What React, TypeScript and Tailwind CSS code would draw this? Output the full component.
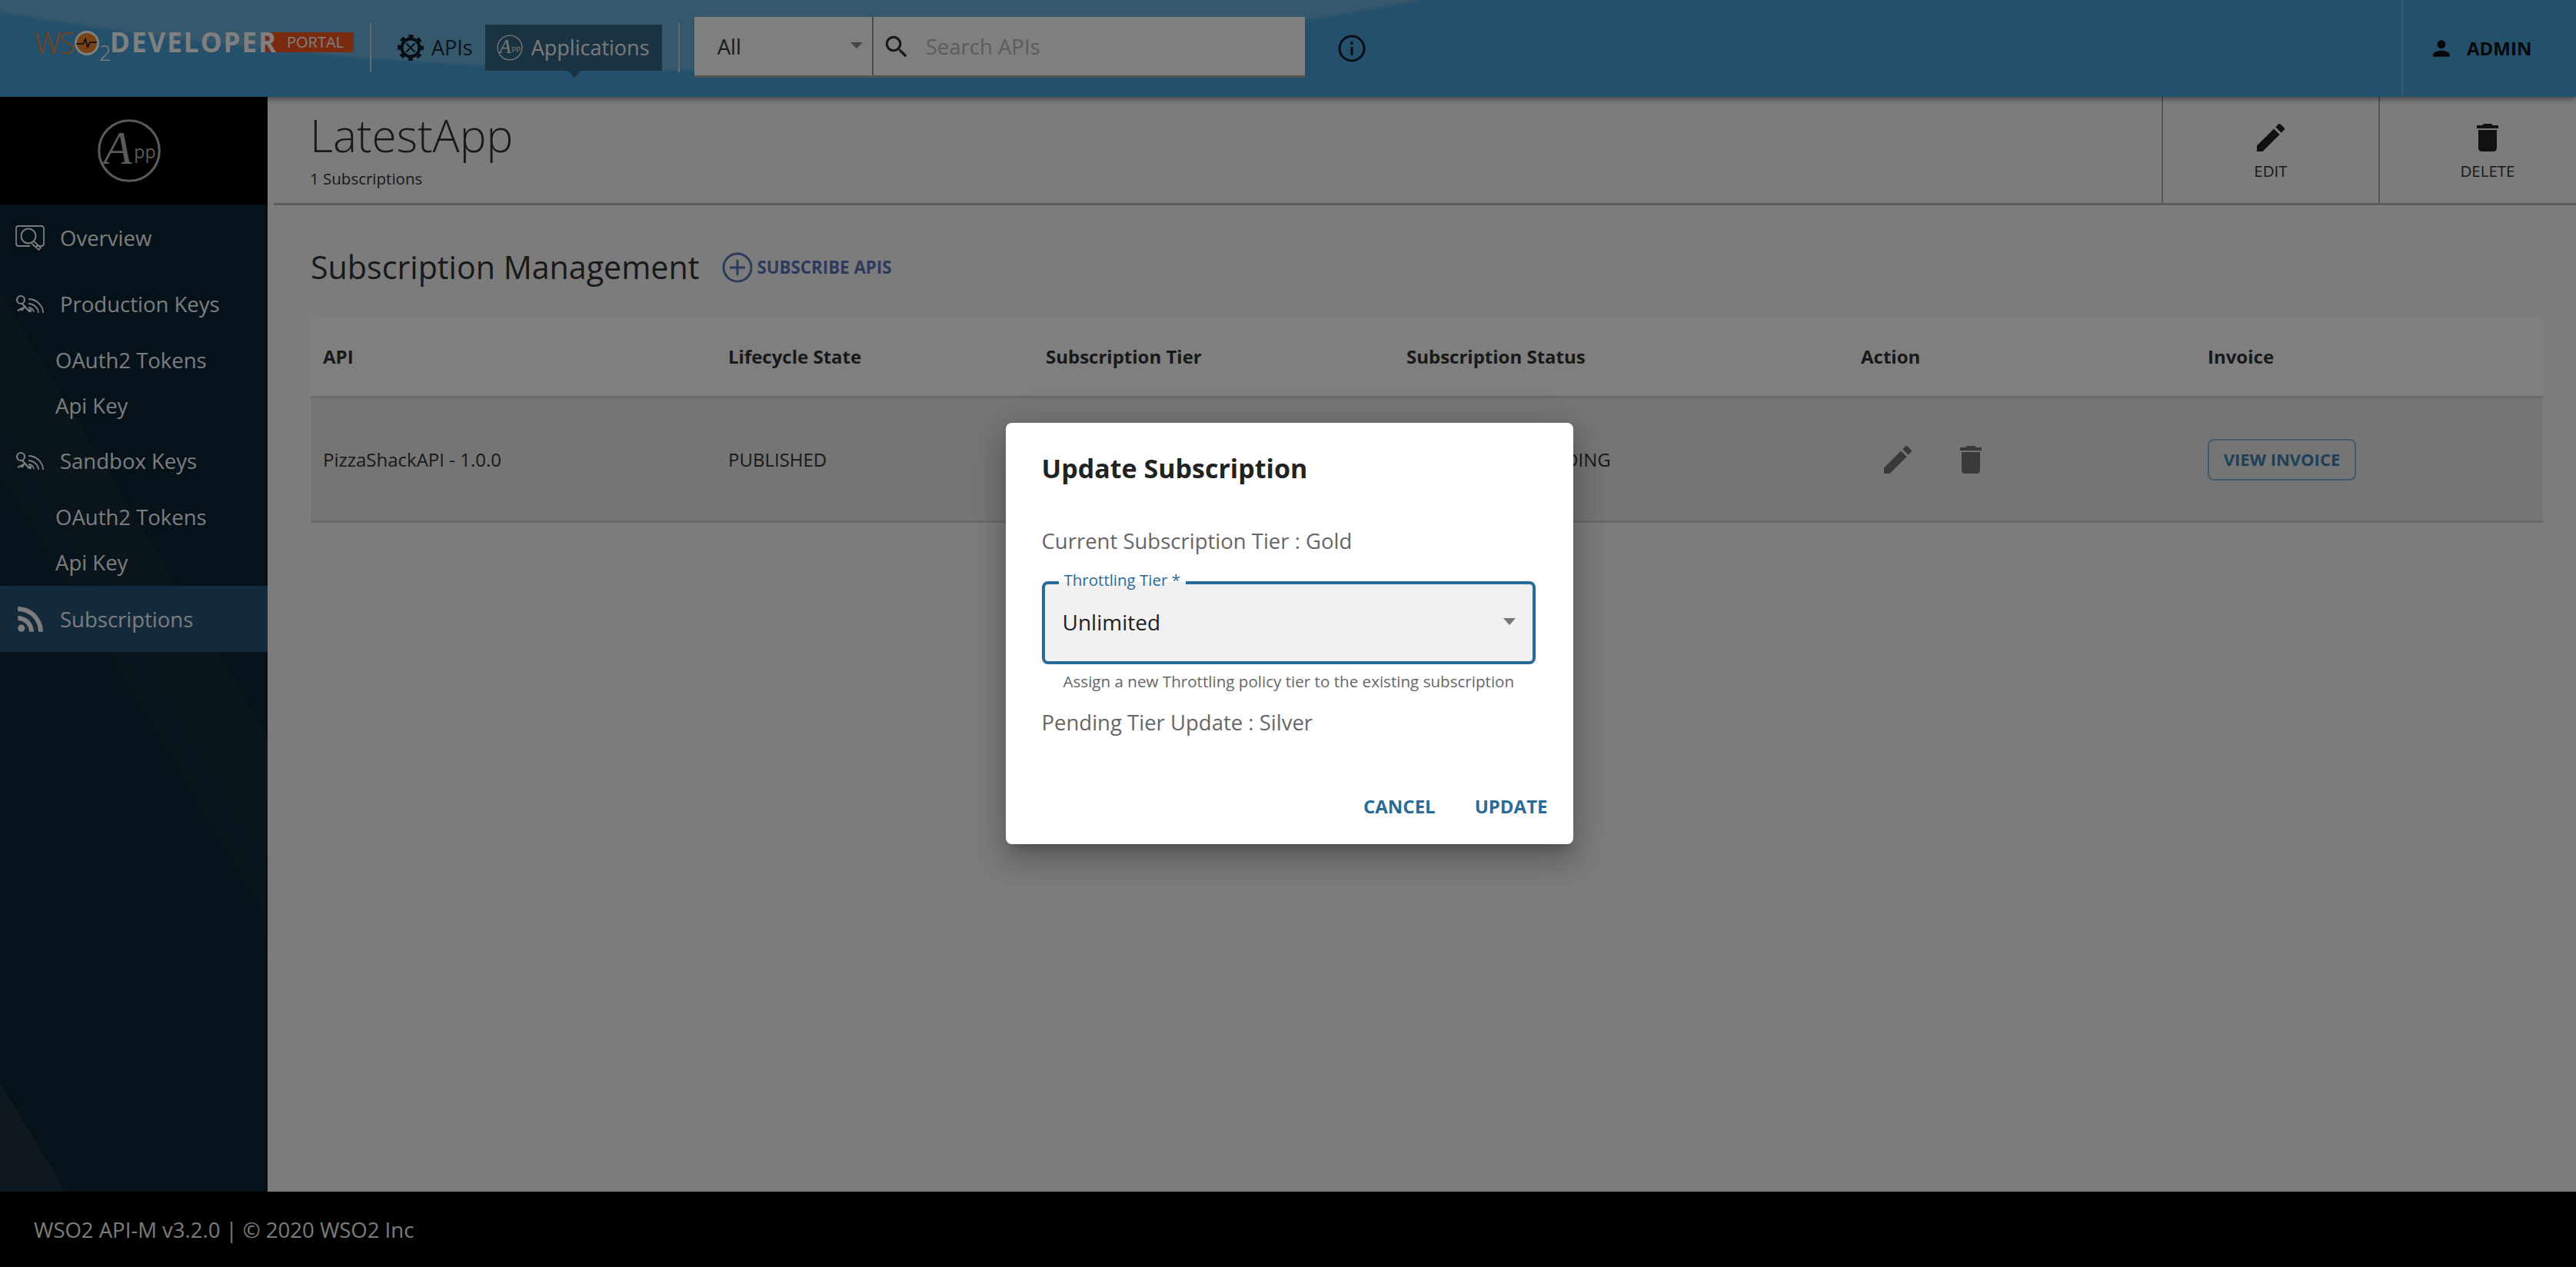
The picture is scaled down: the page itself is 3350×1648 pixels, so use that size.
const editPath = 'M3 17.25V21h3.75L17.81 9.94l-3.75-3.75L3 17.25zM20.71 7.04c.39-.39.39-1.02 0-1.41l-2.34-2.34c-.39-.39-1.02-.39-1.41 0l-1.83 1.83 3.75 3.75 1.83-1.83z';
const deletePath = 'M6 19c0 1.1.9 2 2 2h8c1.1 0 2-.9 2-2V7H6v12zM19 4h-3.5l-1-1h-5l-1 1H5v2h14V4z';
const personPath = 'M12 12c2.21 0 4-1.79 4-4s-1.79-4-4-4-4 1.79-4 4 1.79 4 4 4zm0 2c-2.67 0-8 1.34-8 4v2h16v-2c0-2.66-5.33-4-8-4z';
const searchPath = 'M15.5 14h-.79l-.28-.27C15.41 12.59 16 11.11 16 9.5 16 5.91 13.09 3 9.5 3S3 5.91 3 9.5 5.91 16 9.5 16c1.61 0 3.09-.59 4.23-1.57l.27.28v.79l5 4.99L20.49 19l-4.99-5zm-6 0C7.01 14 5 11.99 5 9.5S7.01 5 9.5 5 14 7.01 14 9.5 11.99 14 9.5 14z';
const rssPath = 'M4 4.44v2.83c7.03 0 12.73 5.7 12.73 12.73h2.83c0-8.59-6.97-15.56-15.56-15.56zm0 5.66v2.83c3.9 0 7.07 3.17 7.07 7.07h2.83c0-5.47-4.43-9.9-9.9-9.9z';

function MuiIcon({ d, className }: { d: string; className: string }) {
  return (
    <svg viewBox="0 0 24 24" fill="currentColor" className={className}>
      <path d={d} />
    </svg>
  );
}

function AppBadge({ className }: { className: string }) {
  return (
    <svg viewBox="0 0 40 40" fill="none" stroke="currentColor" className={className}>
      <circle cx="20" cy="20" r="18.7" strokeWidth="1.5" />
      <text x="4" y="28" fontSize="29" fontStyle="italic" fontFamily="Liberation Serif, serif" fill="currentColor" stroke="none">A</text>
      <text x="23" y="25" fontSize="11" fontFamily="Open Sans, sans-serif" fill="currentColor" stroke="none">pp</text>
    </svg>
  );
}

function GearIcon() {
  return (
    <svg viewBox="0 0 34 34" className="w-[34px] h-[34px] text-[#0c1c28]">
      <circle cx="17" cy="17" r="11.5" fill="none" stroke="currentColor" strokeWidth="4" />
      <circle cx="17" cy="17" r="15" fill="none" stroke="currentColor" strokeWidth="4" strokeDasharray="6 5.78" strokeDashoffset="3" />
      <path d="M12 12l10 10M22 12L12 22" stroke="currentColor" strokeWidth="2" strokeLinecap="round" />
    </svg>
  );
}

function OverviewIcon() {
  return (
    <svg viewBox="0 0 38 34" fill="none" stroke="currentColor" strokeWidth="1.8" className="w-[38px] h-[34px]">
      <path d="M27 27h7a3 3 0 0 0 3-3V4a3 3 0 0 0-3-3H4a3 3 0 0 0-3 3v20a3 3 0 0 0 3 3h15" />
      <circle cx="17" cy="14" r="9.5" strokeWidth="2" />
      <path d="M24 21l9 8-2.5 3-9-8" />
    </svg>
  );
}

function KeyIcon() {
  return (
    <svg viewBox="0 0 38 26" fill="none" stroke="currentColor" className="w-[38px] h-[26px]">
      <circle cx="7" cy="7" r="5" strokeWidth="2.2" />
      <path d="M9 12l9 10M3 21l8-4M12 16l-4 5" strokeWidth="2.2" />
      <circle cx="19" cy="21" r="2.2" fill="currentColor" stroke="none" />
      <path d="M17 6c10 0 19 8 19 18M17 12c7 0 13 6 13 12M17 17c4 0 7 3 7 6" strokeWidth="1.8" />
    </svg>
  );
}

function RssIcon() {
  return (
    <svg viewBox="2 3 19 19" fill="currentColor" className="w-[40px] h-[40px]">
      <circle cx="6.18" cy="17.82" r="2.18" />
      <path d={rssPath} />
    </svg>
  );
}

function Logo() {
  return (
    <div className="flex items-start w-[415px] h-[60px] relative">
      <span className="w-[52px] text-[38px] leading-[42px] font-light tracking-[-2px] text-[#f0822c]">WS</span>
      <span className="mt-[6px] w-[32px] h-[32px] rounded-full bg-[#f0822c] border-[3px] border-white flex items-center justify-center">
        <svg viewBox="0 0 28 14" fill="none" stroke="#111" strokeWidth="1.6" className="w-[28px] shrink-0">
          <path d="M0 8h9l3-6 3 10 3-6h9" />
        </svg>
      </span>
      <span className="w-[14px] text-[27px] leading-none font-light text-white mt-[21px]">2</span>
      <span className="relative z-10 text-[35px] leading-[42px] font-bold text-white tracking-[2px]">DEVELOPER</span>
      <span className="absolute left-[300px] right-0 top-[8px] h-[26px] rounded-[3px] bg-[#f4561f] text-right pr-[13px]">
        <span className="text-white text-[20px] leading-[26px]">PORTAL</span>
      </span>
    </div>
  );
}

type NavItem = { label: string; height: string; icon?: 'overview' | 'key' };

const navItems: NavItem[] = [
  { label: 'Overview', height: 'h-[88px]', icon: 'overview' },
  { label: 'Production Keys', height: 'h-[84px]', icon: 'key' },
  { label: 'OAuth2 Tokens', height: 'h-[62px]' },
  { label: 'Api Key', height: 'h-[56px]' },
  { label: 'Sandbox Keys', height: 'h-[88px]', icon: 'key' },
  { label: 'OAuth2 Tokens', height: 'h-[58px]' },
  { label: 'Api Key', height: 'h-[60px]' },
];

function Sidebar() {
  return (
    <aside className="w-[348px] shrink-0 flex flex-col text-[#f8f8f8] bg-[#0c2434] bg-[linear-gradient(59deg,#1c303c_0,#1c303c_73px,transparent_73px),linear-gradient(239deg,transparent_429px,#152b38_429px,transparent_640px)]">
      <div className="h-[140px] bg-black flex items-center justify-center pr-[12px]">
        <AppBadge className="w-[84px] h-[84px] text-[#b4b4b4]" />
      </div>
      {navItems.map((item, i) => (
        <div key={i} className={`${item.height} flex items-center text-[27.5px] ${item.icon ? 'pl-[20px]' : 'pl-[72px]'}`}>
          {item.icon === 'overview' && <span className="w-[58px]"><OverviewIcon /></span>}
          {item.icon === 'key' && <span className="w-[58px]"><KeyIcon /></span>}
          {item.label}
        </div>
      ))}
      <div className="h-[86px] bg-[#26547a] flex items-center pl-[19px] pt-[2px] text-[27.5px]">
        <span className="w-[59px]"><RssIcon /></span>
        Subscriptions
      </div>
    </aside>
  );
}

function Header() {
  return (
    <header className="relative z-20 h-[126px] shrink-0 flex items-center shadow-[0_2px_8px_rgba(0,0,0,0.5)] bg-[#4aa0d8] bg-[radial-gradient(circle_5136px_at_881px_-5042px,#6cb0d8_99.9%,transparent_100%)] text-[#333]">
      <div className="pl-[45px] w-[481px] pt-[2px] shrink-0">
        <Logo />
      </div>
      <div className="w-[2px] h-[64px] bg-[#bfd9ea] shrink-0 -mt-[2px]" />
      <div className="flex items-center ml-[34px] gap-[10px] text-[#14283a] -mt-[2px]">
        <GearIcon />
        <span className="text-[27px]">APIs</span>
      </div>
      <div className="relative ml-[16px] w-[230px] h-[60px] bg-[#346684] flex items-center pl-[15px] gap-[11px] text-[27px] text-[#f4f4f4] -mt-[2px]">
        <AppBadge className="w-[34px] h-[34px] shrink-0" />
        Applications
        <span className="absolute left-[108px] top-[60px] border-x-[8px] border-x-transparent border-t-[9px] border-t-[#346684]" />
      </div>
      <div className="w-[2px] h-[64px] bg-[#bfd9ea] shrink-0 ml-[21px] -mt-[2px]" />
      <div className="ml-[19px] w-[794px] h-[79px] -mt-[4px] flex bg-white border-b-[3px] border-b-[#aaaaaa]">
        <div className="relative w-[233px] border-r-2 border-r-[#999] flex items-center pl-[30px] pt-[3px] text-[27.5px]">
          All
          <span className="absolute right-[12px] top-[33px] border-x-[8px] border-x-transparent border-t-[8px] border-t-[#888]" />
        </div>
        <div className="flex-1 flex items-center pl-[11px] pt-[3px] gap-[19px]">
          <MuiIcon d={searchPath} className="w-[38px] h-[38px] text-[#333]" />
          <span className="text-[27.5px] text-[#b8b8b8]">Search APIs</span>
        </div>
      </div>
      <svg viewBox="0 0 36 36" fill="none" stroke="#0c1c28" className="ml-[43px] w-[36px] h-[36px]">
        <circle cx="18" cy="18" r="16" strokeWidth="3" />
        <path d="M18 16v11M18 9v4" strokeWidth="3" />
      </svg>
      <div className="ml-auto h-full w-[227px] border-l-2 border-l-[#7ab6de] flex items-center pl-[34px] gap-[17px] text-[#111]">
        <MuiIcon d={personPath} className="w-[32px] h-[32px]" />
        <span className="text-[24px] font-bold">ADMIN</span>
      </div>
    </header>
  );
}

function TitleBar() {
  return (
    <div className="ml-[8px] h-[141px] shrink-0 flex border-b-[3px] border-b-[#b8b8b8] text-[#333]">
      <div className="flex-1 pl-[47px]">
        <h1 className="text-[58.5px] leading-[70px] mt-[14px] font-light">LatestApp</h1>
        <p className="text-[20.5px] leading-[28px] mt-[8px]">1 Subscriptions</p>
      </div>
      <div className="w-[282px] border-l-2 border-l-[#aaa] flex flex-col items-center pt-[29px]">
        <MuiIcon d={editPath} className="w-[48px] h-[48px] text-[#222]" />
        <span className="text-[20.5px] leading-[28px] mt-[5px]">EDIT</span>
      </div>
      {/* the delete column runs past the window edge in the reference */}
      <div className="w-[257px] border-l-2 border-l-[#aaa] overflow-hidden">
        <div className="w-[280px] flex flex-col items-center pt-[29px]">
          <MuiIcon d={deletePath} className="w-[48px] h-[48px] text-[#222]" />
          <span className="text-[20.5px] leading-[28px] mt-[5px]">DELETE</span>
        </div>
      </div>
    </div>
  );
}

const colClass = 'grid grid-cols-[527px_413px_469px_591px_451px_452px]';

function SubscriptionTable() {
  return (
    <div className="text-[24px] text-[#333]">
      <div className={`${colClass} h-[106px] items-center bg-white border-b-[3px] border-b-[#d4d4d4] font-bold`}>
        {['API', 'Lifecycle State', 'Subscription Tier', 'Subscription Status', 'Action', 'Invoice'].map((h) => (
          <div key={h} className="pl-[16px]">{h}</div>
        ))}
      </div>
      <div className={`${colClass} h-[162px] items-center bg-[#eaeaea] border-b-[3px] border-b-[#d4d4d4]`}>
        <div className="pl-[16px]">PizzaShackAPI - 1.0.0</div>
        <div className="pl-[16px]">PUBLISHED</div>
        <div className="pl-[16px]" />
        <div className="pl-[16px]">TIER_UPDATE_PENDING</div>
        <div className="pl-[16px] flex items-center gap-[47px] text-[#747474]">
          <MuiIcon d={editPath} className="ml-[24px] w-[48px] h-[48px]" />
          <MuiIcon d={deletePath} className="w-[48px] h-[48px]" />
        </div>
        <div className="pl-[16px]">
          <button className="w-[193px] h-[54px] rounded-[8px] border-2 border-[#8cb4d4] text-[#3e80b2] font-bold text-[22px]">VIEW INVOICE</button>
        </div>
      </div>
    </div>
  );
}

function UpdateDialog() {
  return (
    <div className="absolute inset-0 z-30 bg-black/50 flex items-center justify-center pl-[3px]">
      <div className="w-[738px] h-[548px] rounded-[8px] bg-white shadow-[0_11px_15px_-7px_rgba(0,0,0,0.2),0_24px_38px_3px_rgba(0,0,0,0.14),0_9px_46px_8px_rgba(0,0,0,0.12)] flex flex-col pl-[47px] pr-[33px]">
        <h2 className="text-[34px] leading-[44px] font-bold text-[#222] mt-[37px]">Update Subscription</h2>
        <p className="text-[27.5px] leading-[38px] text-[#666] mt-[54px]">Current Subscription Tier : Gold</p>
        <div className="relative w-[642px] h-[108px] mt-[33px] rounded-[8px] border-[4px] border-[#2a6a98] bg-[#f1f1f1] flex items-center pl-[23px] pb-[2px]">
          <span className="absolute left-[18px] -top-[19px] bg-[linear-gradient(#fff_60%,#f1f1f1_60%)] px-[7px] text-[20.5px] leading-[26px] text-[#2a6a98]">Throttling Tier *</span>
          <span className="text-[28px] text-[#222]">Unlimited</span>
          <span className="absolute right-[22px] top-[44px] border-x-[8px] border-x-transparent border-t-[9px] border-t-[#777]" />
        </div>
        <p className="text-[20.6px] leading-[28px] text-[#666] pl-[28px] mt-[8px]">Assign a new Throttling policy tier to the existing subscription</p>
        <p className="text-[27.5px] leading-[38px] text-[#666] mt-[21px]">Pending Tier Update : Silver</p>
        <div className="mt-auto mb-[31px] flex justify-end gap-[51px] text-[24px] font-bold text-[#2a6a98]">
          <span>CANCEL</span>
          <span>UPDATE</span>
        </div>
      </div>
    </div>
  );
}

export default function App() {
  return (
    <div className="relative w-[3350px] h-[1648px] overflow-hidden flex flex-col bg-[#f8f8f8] font-['Open_Sans',sans-serif]">
      <Header />
      <div className="flex-1 min-h-0 flex">
        <Sidebar />
        <main className="flex-1 flex flex-col">
          <TitleBar />
          <div className="pl-[56px] pr-[43px]">
            <div className="flex items-center h-[145px] pt-[16px]">
              <h2 className="text-[41.2px] text-[#333]">Subscription Management</h2>
              <svg viewBox="0 0 40 40" fill="none" stroke="#5a74b8" strokeWidth="3" className="ml-[30px] w-[40px] h-[40px]">
                <circle cx="20" cy="20" r="18" />
                <path d="M20 10v20M10 20h20" />
              </svg>
              <span className="ml-[5px] text-[22.3px] font-bold text-[#5a74b8]">SUBSCRIBE APIS</span>
            </div>
            <SubscriptionTable />
          </div>
        </main>
      </div>
      <footer className="h-[98px] shrink-0 bg-black text-[#f4f4f4] text-[27.5px] flex items-center pl-[44px] pt-[1px]">
        WSO2 API-M v3.2.0 | © 2020 WSO2 Inc
      </footer>
      <UpdateDialog />
    </div>
  );
}
